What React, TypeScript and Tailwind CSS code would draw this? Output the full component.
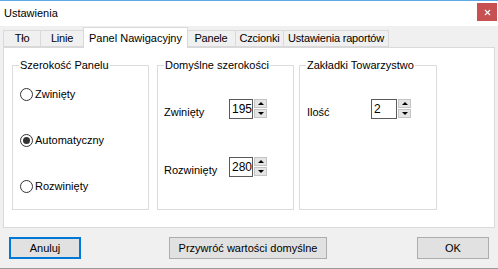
import { X } from 'lucide-react';

const font = { fontFamily: '"Liberation Sans", Arial, sans-serif' };

function Radio({ label, checked }: { label: string; checked?: boolean }) {
  return (
    <div className="flex items-center h-[14px]">
      <span className="w-[13px] h-[13px] rounded-full border border-[#333] bg-white flex items-center justify-center">
        {checked && <span className="w-[7px] h-[7px] rounded-full bg-[#333]" />}
      </span>
      <span className="ml-[2px] text-[11px] text-black">{label}</span>
    </div>
  );
}

function Spin({ value, w }: { value: string; w: string }) {
  return (
    <div className="flex items-start">
      <div className={`${w} h-[20px] border border-[#5a5a5a] bg-white text-[12px] leading-[18px] pl-[2px] text-black`}>
        {value}
      </div>
      <div className="ml-[1px] flex flex-col gap-[1px]">
        <div className="w-[13px] h-[9px] bg-[#e5e5e5] border border-[#c4c4c4] flex items-center justify-center">
          <span className="w-0 h-0 border-l-[3px] border-r-[3px] border-b-[3px] border-l-transparent border-r-transparent border-b-black" />
        </div>
        <div className="w-[13px] h-[9px] bg-[#e5e5e5] border border-[#c4c4c4] flex items-center justify-center">
          <span className="w-0 h-0 border-l-[3px] border-r-[3px] border-t-[3px] border-l-transparent border-r-transparent border-t-black" />
        </div>
      </div>
    </div>
  );
}

function Group({ title, w, children }: { title: string; w: string; children: React.ReactNode }) {
  return (
    <fieldset className={`${w} h-[152px] border border-[#dcdcdc] rounded-none`}>
      <legend className="ml-[6px] px-[1px] text-[11px] leading-[14px] text-black">{title}</legend>
      {children}
    </fieldset>
  );
}

const tabs = ['Tło', 'Linie', 'Panel Nawigacyjny', 'Panele', 'Czcionki', 'Ustawienia raportów'];
const tabW = ['w-[38px]', 'w-[43px]', 'w-[105px]', 'w-[49px]', 'w-[49px]', 'w-[106px]'];

export default function App() {
  return (
    <div style={font} className="w-[498px] h-[269px] bg-[#f0f0f0] flex flex-col border-t border-[#5fa9e6] border-b border-b-[#9a9a9a] overflow-hidden">
      <div className="h-[25px] bg-white flex items-start justify-between pl-[4px] pr-[1px]">
        <span className="text-[11px] mt-[4px] text-black">Ustawienia</span>
        <div className="mt-[2px] w-[20px] h-[18px] bg-[#c75050] flex items-center justify-center">
          <X className="w-[9px] h-[9px] text-white" strokeWidth={3} />
        </div>
      </div>

      <div className="pl-[3px] h-[21px] flex items-end">
        {tabs.map((t, i) =>
          i === 2 ? (
            <div
              key={t}
              className={`${tabW[i]} h-[21px] bg-white border border-b-0 border-[#d9d9d9] text-[11px] text-black flex items-start justify-center pt-[2px] relative z-10 -mb-px`}
            >
              {t}
            </div>
          ) : (
            <div
              key={t}
              className={`${tabW[i]} h-[17px] bg-[#f0f0f0] border border-[#d9d9d9] ${i === 3 ? 'border-l-0' : ''} ${i === 1 ? 'border-r-0' : ''} -ml-px first:ml-0 text-[11px] text-black flex items-center justify-center tracking-[-0.2px]`}
            >
              {t}
            </div>
          )
        )}
      </div>

      <div className="ml-[3px] w-[492px] h-[181px] bg-white border border-[#d9d9d9] pl-[8px] pt-[10px] flex items-start">
        <Group title="Szerokość Panelu" w="w-[137px]">
          <div className="pl-[7px] pt-[15px] flex flex-col gap-[32px]">
            <Radio label="Zwinięty" />
            <Radio label="Automatyczny" checked />
            <Radio label="Rozwinięty" />
          </div>
        </Group>
        <div className="w-[8px]" />
        <Group title="Domyślne szerokości" w="w-[137px]">
          <div className="pl-[6px] pt-[27px] flex flex-col gap-[36px]">
            <div className="flex items-start">
              <span className="w-[65px] pt-[5px] text-[11px] text-black">Zwinięty</span>
              <Spin value="195" w="w-[24px]" />
            </div>
            <div className="flex items-start">
              <span className="w-[65px] pt-[5px] text-[11px] text-black">Rozwinięty</span>
              <Spin value="280" w="w-[24px]" />
            </div>
          </div>
        </Group>
        <div className="w-[5px]" />
        <Group title="Zakładki Towarzystwo" w="w-[138px]">
          <div className="pl-[7px] pt-[27px] flex items-start">
            <span className="w-[64px] pt-[5px] text-[11px] text-black">Ilość</span>
            <Spin value="2" w="w-[26px]" />
          </div>
        </Group>
      </div>

      <div className="flex items-start mt-[9px] px-[9px]">
        <button className="w-[72px] h-[22px] bg-[#e1e1e1] border-2 border-[#0078d7] text-[11px] text-black">
          Anuluj
        </button>
        <button className="ml-[88px] w-[158px] h-[22px] bg-[#e1e1e1] border border-[#adadad] text-[11px] text-black">
          Przywróć wartości domyślne
        </button>
        <button className="ml-[90px] w-[72px] h-[22px] bg-[#e1e1e1] border border-[#adadad] text-[11px] text-black">
          OK
        </button>
      </div>
    </div>
  );
}
